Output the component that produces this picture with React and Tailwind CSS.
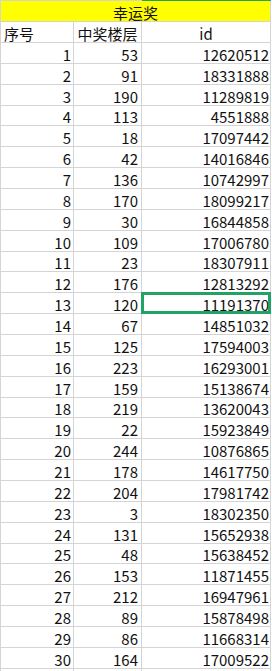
import React from 'react';

const rows = [
  [1, 53, 12620512], [2, 91, 18331888], [3, 190, 11289819], [4, 113, 4551888],
  [5, 18, 17097442], [6, 42, 14016846], [7, 136, 10742997], [8, 170, 18099217],
  [9, 30, 16844858], [10, 109, 17006780], [11, 23, 18307911], [12, 176, 12813292],
  [13, 120, 11191370], [14, 67, 14851032], [15, 125, 17594003], [16, 223, 16293001],
  [17, 159, 15138674], [18, 219, 13620043], [19, 22, 15923849], [20, 244, 10876865],
  [21, 178, 14617750], [22, 204, 17981742], [23, 3, 18302350], [24, 131, 15652938],
  [25, 48, 15638452], [26, 153, 11871455], [27, 212, 16947961], [28, 89, 15878498],
  [29, 86, 11668314], [30, 164, 17009522],
];

const font = { fontFamily: '"Noto Sans CJK SC", "Noto Sans", sans-serif' };

export default function App() {
  return (
    <div className="w-[272px] h-[671px] overflow-hidden bg-white text-[15px] leading-none text-[#111]" style={font}>
      {/* column header edge, selected column is green */}
      <div className="flex h-px">
        <div className="w-[142px] bg-[#d4d4d4]" />
        <div className="w-[129px] bg-[#21a366]" />
      </div>
      <div className="border-l border-[#d4d4d4] w-[271px]">
        {/* title */}
        <div className="h-[21px] bg-[#ffff00] border-b border-r border-[#d4d4d4] flex items-end justify-center pb-[1px]">
          幸运奖
        </div>
        {/* header */}
        <div className="grid grid-cols-[73px_68px_129px] h-[21px]">
          <div className="border-r border-b border-[#d4d4d4] flex items-end pl-[3px] pb-[1px]">序号</div>
          <div className="border-r border-b border-[#d4d4d4] flex items-end justify-center pb-[1px]">中奖楼层</div>
          <div className="border-r border-b border-[#d4d4d4] flex items-end justify-center pb-[1px]">id</div>
        </div>
        {rows.map(([n, floor, id]) => (
          <div key={n} className="grid grid-cols-[73px_68px_129px] h-[20.87px]">
            <div className="border-r border-b border-[#d4d4d4] flex items-end justify-end pr-[2px] pb-[1px]">{n}</div>
            <div className="border-r border-b border-[#d4d4d4] flex items-end justify-end pr-[3px] pb-[1px]">{floor}</div>
            <div className="relative border-r border-b border-[#d4d4d4] flex items-end justify-end pr-[1px] pb-[1px]">
              {id}
              {n === 13 && (
                <div className="absolute -left-px -top-px -right-px -bottom-px border-[3px] border-[#21a366]" />
              )}
            </div>
          </div>
        ))}
        <div className="grid grid-cols-[73px_68px_129px] h-[21px]">
          <div className="border-r border-[#d4d4d4]" />
          <div className="border-r border-[#d4d4d4]" />
          <div className="border-r border-[#d4d4d4]" />
        </div>
      </div>
    </div>
  );
}
